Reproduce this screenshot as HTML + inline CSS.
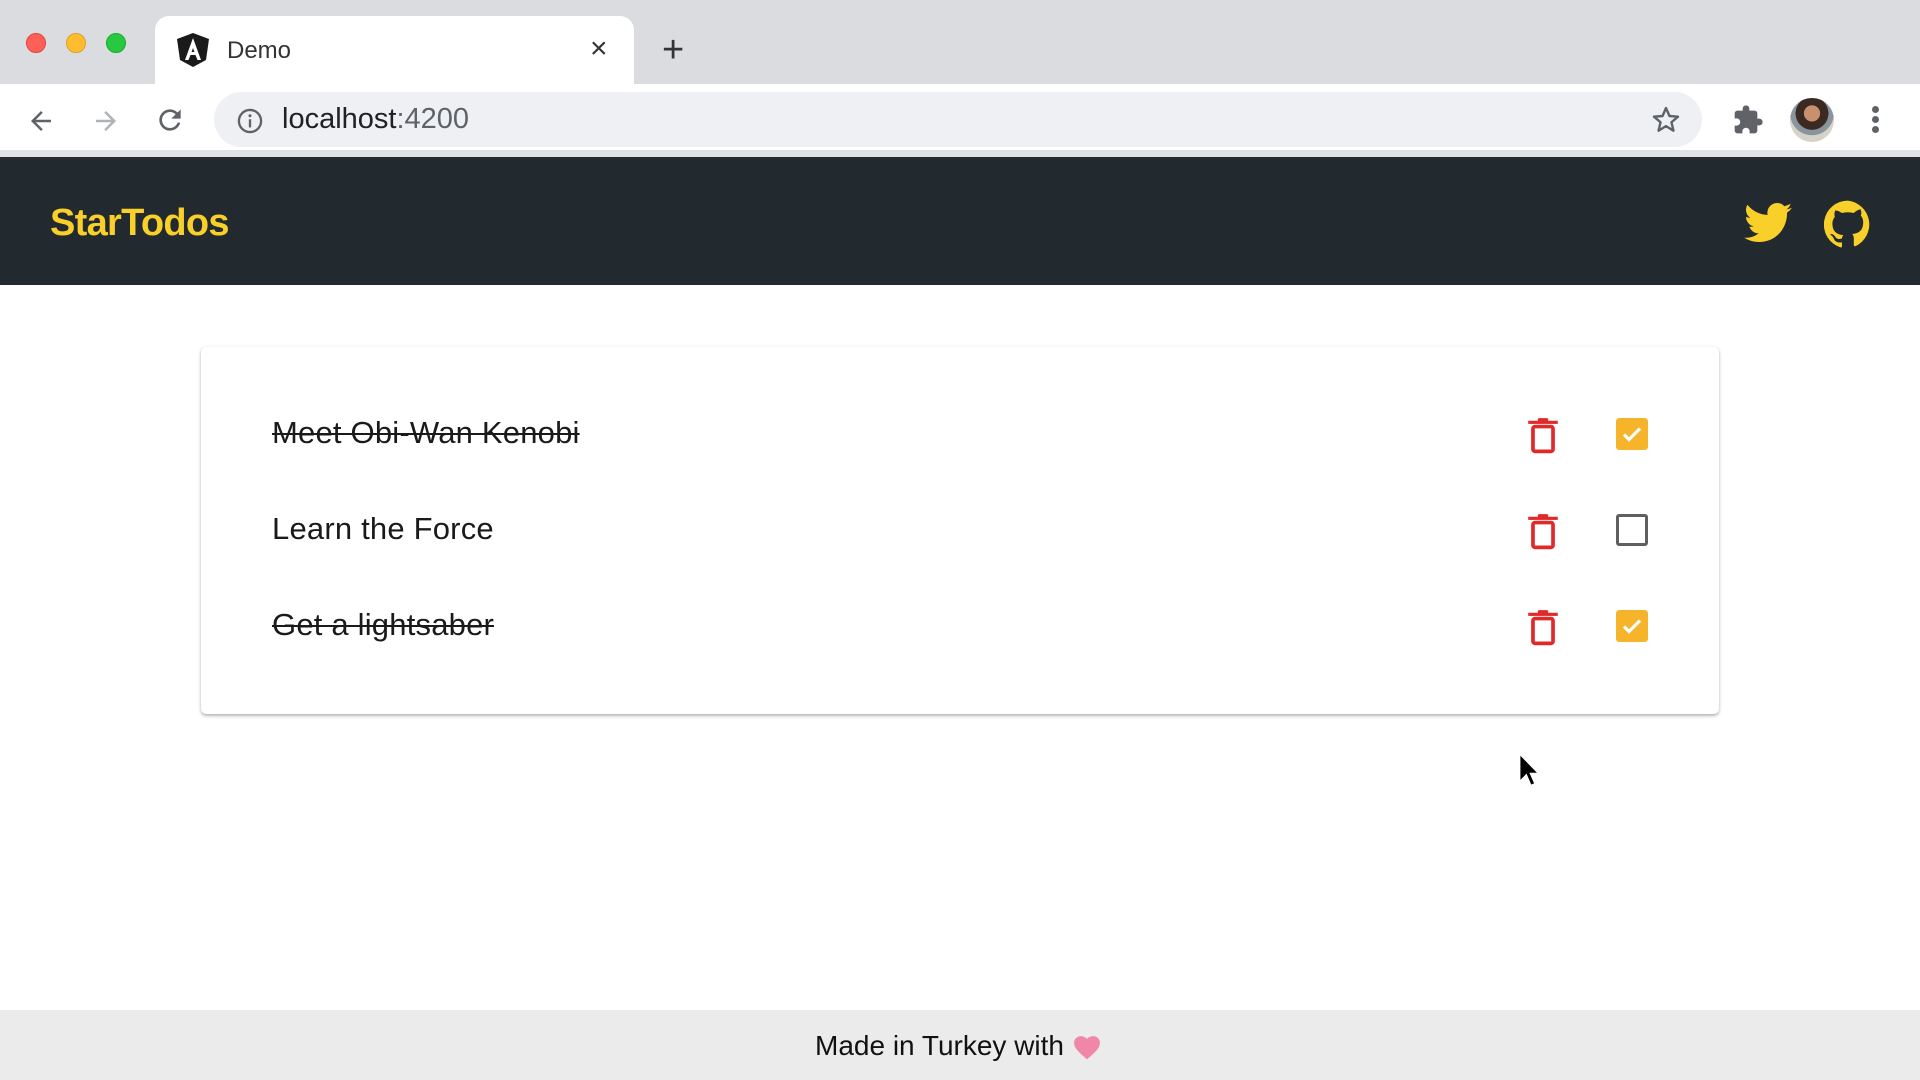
<!DOCTYPE html>
<html><head><meta charset="utf-8"><style>
*{margin:0;padding:0;box-sizing:border-box}
body{width:1920px;height:1080px;overflow:hidden;background:#fff;font-family:"Liberation Sans",sans-serif;position:relative}
.abs{position:absolute}
.dot{position:absolute;width:20px;height:20px;border-radius:50%;top:33px}
.item{position:absolute;left:272px;font-size:31px;color:#1a1a1a}
.done{text-decoration:line-through;text-decoration-thickness:2px}
.cb{position:absolute;left:1616px;width:32px;height:32px;border-radius:3px}
</style></head><body>
<div class="abs" style="left:0;top:0;width:1920px;height:84px;background:#dadce0"></div>
<div class="dot" style="left:26px;background:#fe5f57;border:1px solid #e0443e"></div>
<div class="dot" style="left:66px;background:#febc2e;border:1px solid #dea123"></div>
<div class="dot" style="left:106px;background:#28c840;border:1px solid #1aab29"></div>
<div class="abs" style="left:155px;top:16px;width:479px;height:70px;background:#fff;border-radius:14px 14px 0 0"></div>
<svg class="abs" style="left:177px;top:33px" width="32" height="34" viewBox="0 0 32 34"><path d="M16 0 L32 6 L29 27 L16 34 L3 27 L0 6Z" fill="#1a1a1a"/><path d="M16 5 L8 27 H11.5 L13.5 22 H18.5 L20.5 27 H24Z M14.6 19 L16 15 L17.4 19Z" fill="#fff"/></svg>
<div class="abs" style="left:227px;top:37px;font-size:24px;color:#333">Demo</div>
<div class="abs" style="left:590px;top:32px;font-size:30px;color:#333">×</div>
<div class="abs" style="left:662px;top:29px;font-size:38px;color:#333;font-weight:300">+</div>
<div class="abs" style="left:0;top:84px;width:1920px;height:73px;background:#fff;border-bottom:7px solid #dfe1e5"></div>
<svg class="abs" style="left:26px;top:106px" width="30" height="30" viewBox="0 0 24 24"><path d="M20 11H7.8l5.6-5.6L12 4l-8 8 8 8 1.4-1.4L7.8 13H20z" fill="#5f6368"/></svg>
<svg class="abs" style="left:91px;top:106px" width="30" height="30" viewBox="0 0 24 24"><path d="M4 11h12.2l-5.6-5.6L12 4l8 8-8 8-1.4-1.4 5.6-5.6H4z" fill="#b0b2b5"/></svg>
<svg class="abs" style="left:154px;top:104px" width="32" height="32" viewBox="0 0 24 24"><path d="M17.65 6.35A8 8 0 1 0 19.73 14h-2.08A6 6 0 1 1 12 6c1.66 0 3.14.69 4.22 1.78L13 11h7V4z" fill="#5f6368"/></svg>
<div class="abs" style="left:214px;top:92px;width:1488px;height:55px;background:#eef0f3;border-radius:28px"></div>
<svg class="abs" style="left:236px;top:107px" width="28" height="28" viewBox="0 0 24 24"><circle cx="12" cy="12" r="9.5" fill="none" stroke="#5f6368" stroke-width="2"/><rect x="11" y="10.5" width="2" height="7" fill="#5f6368"/><circle cx="12" cy="7.5" r="1.3" fill="#5f6368"/></svg>
<div class="abs" style="left:282px;top:103px;font-size:29px;color:#202124">localhost<span style="color:#5f6368">:4200</span></div>
<svg class="abs" style="left:1650px;top:104px" width="32" height="32" viewBox="0 0 24 24"><path d="M12 3l2.6 6 6.4.5-4.9 4.2 1.5 6.3L12 16.6 6.4 20l1.5-6.3L3 9.5 9.4 9z" fill="none" stroke="#5f6368" stroke-width="1.8" stroke-linejoin="round"/></svg>
<svg class="abs" style="left:1732px;top:104px" width="32" height="32" viewBox="0 0 24 24"><path d="M20.5 11H19V7a2 2 0 0 0-2-2h-4V3.5a2.5 2.5 0 0 0-5 0V5H4a2 2 0 0 0-2 2v3.8h1.5a2.7 2.7 0 0 1 0 5.4H2V20a2 2 0 0 0 2 2h3.8v-1.5a2.7 2.7 0 0 1 5.4 0V22H17a2 2 0 0 0 2-2v-4h1.5a2.5 2.5 0 0 0 0-5z" fill="#5f6368"/></svg>
<div class="abs" style="left:1790px;top:98px;width:44px;height:44px;border-radius:50%;background:radial-gradient(circle at 50% 35%,#c9906f 0 22%,#3a2a22 23% 45%,#8a949e 46% 60%,#d7d2c8 61%)"></div>
<div class="abs" style="left:1872px;top:106px;width:7px;height:7px;border-radius:50%;background:#5f6368;box-shadow:0 10px 0 #5f6368,0 20px 0 #5f6368"></div>
<div class="abs" style="left:0;top:157px;width:1920px;height:128px;background:#22292f"></div>
<div class="abs" style="left:50px;top:202px;font-size:38px;font-weight:bold;color:#f9cf2a;letter-spacing:-0.7px">StarTodos</div>
<svg class="abs" style="left:1744px;top:202px" width="48" height="42" viewBox="0 0 24 20"><path d="M24 2.4a9.8 9.8 0 0 1-2.8.8A4.9 4.9 0 0 0 23.3.4a9.9 9.9 0 0 1-3.1 1.2A4.9 4.9 0 0 0 11.8 6 14 14 0 0 1 1.7.9a4.9 4.9 0 0 0 1.5 6.6A4.9 4.9 0 0 1 1 6.9a4.9 4.9 0 0 0 3.9 4.8 4.9 4.9 0 0 1-2.2.1 4.9 4.9 0 0 0 4.6 3.4A9.9 9.9 0 0 1 0 17.3 14 14 0 0 0 7.5 19.5c9.1 0 14-7.5 14-14v-.6A10 10 0 0 0 24 2.4z" fill="#f9cf2a"/></svg>
<svg class="abs" style="left:1824px;top:200px" width="48" height="48" viewBox="0 0 24 24"><path d="M12 .3a12 12 0 0 0-3.8 23.4c.6.1.8-.3.8-.6v-2c-3.3.7-4-1.6-4-1.6-.6-1.4-1.4-1.800-1.4-1.8-1-.7.1-.7.1-.7 1.2.1 1.8 1.2 1.8 1.2 1 1.8 2.8 1.3 3.5 1 0-.8.4-1.3.7-1.6-2.7-.3-5.5-1.300-5.5-5.9 0-1.3.5-2.4 1.2-3.2 0-.4-.5-1.6.2-3.2 0 0 1-.3 3.3 1.2a11.5 11.5 0 0 1 6 0C17.3 4.4 18.3 4.7 18.3 4.7c.7 1.6.2 2.8.1 3.2.8.8 1.2 1.9 1.2 3.2 0 4.6-2.8 5.6-5.5 5.9.4.4.8 1.1.8 2.2v3.3c0 .3.2.7.8.6A12 12 0 0 0 12 .3" fill="#f9cf2a"/></svg>
<div class="abs" style="left:201px;top:347px;width:1518px;height:367px;background:#fff;border-radius:5px;box-shadow:0 2px 3px rgba(0,0,0,.28),0 0 3px rgba(0,0,0,.06)"></div>
<div class="item done" style="top:415px;letter-spacing:0.2px">Meet Obi-Wan Kenobi</div>
<div class="item" style="top:511px;letter-spacing:0.2px">Learn the Force</div>
<div class="item done" style="top:607px;letter-spacing:0.2px">Get a lightsaber</div>
<svg class="abs" style="left:1527px;top:416px" width="32" height="38" viewBox="0 0 30 36"><rect x="1" y="4.5" width="28" height="3" fill="#e02a2a"/><rect x="10" y="2" width="10" height="3" rx="1.5" fill="#e02a2a"/><rect x="5.5" y="10" width="19" height="23.5" rx="2" fill="none" stroke="#e02a2a" stroke-width="3.5"/></svg>
<svg class="abs" style="left:1527px;top:512px" width="32" height="38" viewBox="0 0 30 36"><rect x="1" y="4.5" width="28" height="3" fill="#e02a2a"/><rect x="10" y="2" width="10" height="3" rx="1.5" fill="#e02a2a"/><rect x="5.5" y="10" width="19" height="23.5" rx="2" fill="none" stroke="#e02a2a" stroke-width="3.5"/></svg>
<svg class="abs" style="left:1527px;top:608px" width="32" height="38" viewBox="0 0 30 36"><rect x="1" y="4.5" width="28" height="3" fill="#e02a2a"/><rect x="10" y="2" width="10" height="3" rx="1.5" fill="#e02a2a"/><rect x="5.5" y="10" width="19" height="23.5" rx="2" fill="none" stroke="#e02a2a" stroke-width="3.5"/></svg>
<svg class="cb" style="top:418px" viewBox="0 0 32 32"><rect width="32" height="32" rx="3" fill="#f6b42a"/><path d="M8 16.5l5 5 11-11" fill="none" stroke="#fff" stroke-width="3.2"/></svg>
<div class="cb" style="top:514px;border:3.5px solid #5f5f5f"></div>
<svg class="cb" style="top:610px" viewBox="0 0 32 32"><rect width="32" height="32" rx="3" fill="#f6b42a"/><path d="M8 16.5l5 5 11-11" fill="none" stroke="#fff" stroke-width="3.2"/></svg>
<svg class="abs" style="left:1518px;top:752px" width="24" height="36" viewBox="0 0 16 24"><path d="M1 1v19l4.5-4.5 3 7 3-1.3-3-6.8H14z" fill="#000" stroke="#fff" stroke-width="1.2"/></svg>
<div class="abs" style="left:0;top:1010px;width:1920px;height:70px;background:#ebebeb"></div>
<div class="abs" style="left:815px;top:1030px;font-size:28px;color:#111">Made in Turkey with</div>
<svg class="abs" style="left:1072px;top:1033px" width="30" height="27" viewBox="0 0 24 22"><path d="M12 21.5l-1.5-1.3C5 15.3 1.5 12.1 1.5 8A5.5 5.5 0 0 1 7 2.5c1.9 0 3.7.9 5 2.3 1.3-1.400 3.1-2.3 5-2.3A5.5 5.5 0 0 1 22.5 8c0 4.1-3.5 7.3-9 12.2z" fill="#f086a8"/></svg>
</body></html>
